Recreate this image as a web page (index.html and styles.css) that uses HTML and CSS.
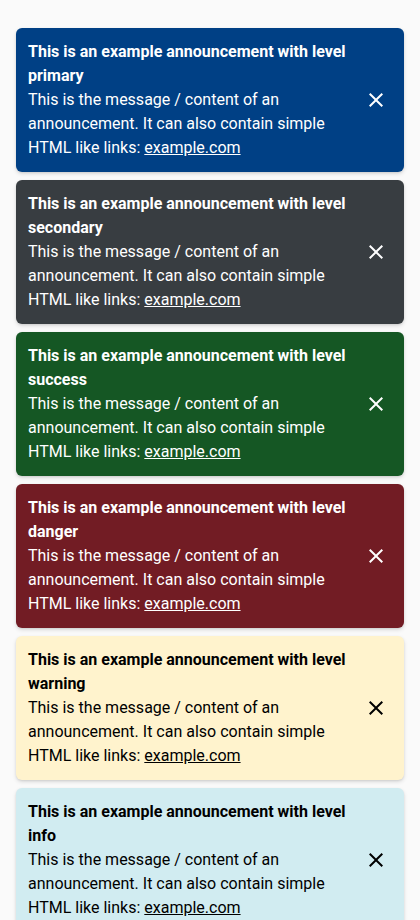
FILE: index.html
```html
<!DOCTYPE html>
<html>
<head>
<meta charset="utf-8">
<link rel="stylesheet" href="styles.css">
</head>
<body>
<div class="list">
  <div class="card primary">
    <div class="text">
      <div class="title">This is an example announcement with level primary</div>
      <div class="msg">This is the message / content of an announcement. It can also contain simple HTML like links: <a href="#">example.com</a></div>
    </div>
    <button class="close"><svg viewBox="0 0 24 24" width="24" height="24"><path d="M19 6.41L17.59 5 12 10.59 6.41 5 5 6.41 10.59 12 5 17.59 6.41 19 12 13.41 17.59 19 19 17.59 13.41 12z"/></svg></button>
  </div>
  <div class="card secondary">
    <div class="text">
      <div class="title">This is an example announcement with level secondary</div>
      <div class="msg">This is the message / content of an announcement. It can also contain simple HTML like links: <a href="#">example.com</a></div>
    </div>
    <button class="close"><svg viewBox="0 0 24 24" width="24" height="24"><path d="M19 6.41L17.59 5 12 10.59 6.41 5 5 6.41 10.59 12 5 17.59 6.41 19 12 13.41 17.59 19 19 17.59 13.41 12z"/></svg></button>
  </div>
  <div class="card success">
    <div class="text">
      <div class="title">This is an example announcement with level success</div>
      <div class="msg">This is the message / content of an announcement. It can also contain simple HTML like links: <a href="#">example.com</a></div>
    </div>
    <button class="close"><svg viewBox="0 0 24 24" width="24" height="24"><path d="M19 6.41L17.59 5 12 10.59 6.41 5 5 6.41 10.59 12 5 17.59 6.41 19 12 13.41 17.59 19 19 17.59 13.41 12z"/></svg></button>
  </div>
  <div class="card danger">
    <div class="text">
      <div class="title">This is an example announcement with level danger</div>
      <div class="msg">This is the message / content of an announcement. It can also contain simple HTML like links: <a href="#">example.com</a></div>
    </div>
    <button class="close"><svg viewBox="0 0 24 24" width="24" height="24"><path d="M19 6.41L17.59 5 12 10.59 6.41 5 5 6.41 10.59 12 5 17.59 6.41 19 12 13.41 17.59 19 19 17.59 13.41 12z"/></svg></button>
  </div>
  <div class="card warning">
    <div class="text">
      <div class="title">This is an example announcement with level warning</div>
      <div class="msg">This is the message / content of an announcement. It can also contain simple HTML like links: <a href="#">example.com</a></div>
    </div>
    <button class="close"><svg viewBox="0 0 24 24" width="24" height="24"><path d="M19 6.41L17.59 5 12 10.59 6.41 5 5 6.41 10.59 12 5 17.59 6.41 19 12 13.41 17.59 19 19 17.59 13.41 12z"/></svg></button>
  </div>
  <div class="card info">
    <div class="text">
      <div class="title">This is an example announcement with level info</div>
      <div class="msg">This is the message / content of an announcement. It can also contain simple HTML like links: <a href="#">example.com</a></div>
    </div>
    <button class="close"><svg viewBox="0 0 24 24" width="24" height="24"><path d="M19 6.41L17.59 5 12 10.59 6.41 5 5 6.41 10.59 12 5 17.59 6.41 19 12 13.41 17.59 19 19 17.59 13.41 12z"/></svg></button>
  </div>
</div>
</body>
</html>
```

FILE: styles.css
```css
html, body {
  margin: 0;
  padding: 0;
  background: #fafafa;
  font-family: Roboto, "Liberation Sans", sans-serif;
}
.list {
  display: flex;
  flex-direction: column;
  gap: 8px;
  padding: 28px 16px;
}
.card {
  display: flex;
  align-items: center;
  padding: 12px 8px 12px 12px;
  border-radius: 6px;
  box-shadow: 0 2px 4px rgba(0,0,0,0.12), 0 1px 2px rgba(0,0,0,0.08);
  color: #fff;
}
.text {
  flex: 1;
  min-width: 0;
  padding-right: 8px;
}
.title {
  font-weight: 700;
  font-size: 16px;
  line-height: 24px;
}
.msg {
  font-size: 16px;
  line-height: 24px;
}
.msg a {
  color: inherit;
  text-decoration: underline;
}
.close {
  flex: none;
  width: 40px;
  height: 40px;
  border: 0;
  padding: 0;
  background: transparent;
  display: flex;
  align-items: center;
  justify-content: center;
  color: inherit;
}
.close svg {
  fill: currentColor;
}
.primary { background: #004085; }
.secondary { background: #383d41; }
.success { background: #155724; }
.danger { background: #721c24; }
.warning { background: #fff3cd; color: #000; }
.info { background: #d1ecf1; color: #000; }
```
